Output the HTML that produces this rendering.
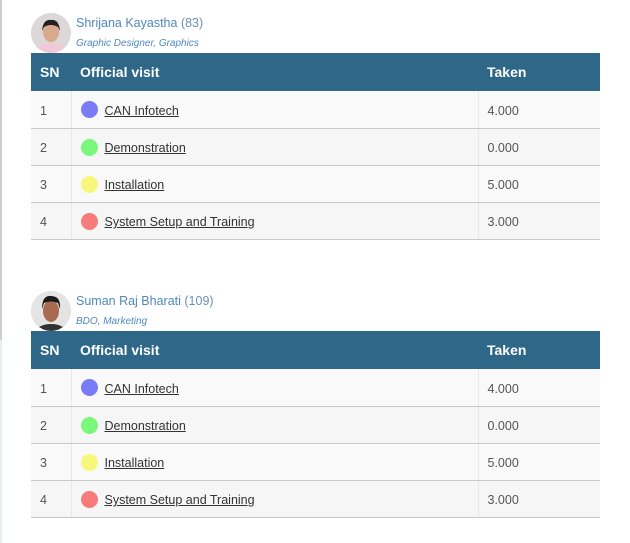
<!DOCTYPE html>
<html><head><style>
*{margin:0;padding:0;box-sizing:border-box}
body{width:630px;height:543px;background:#fff;font-family:"Liberation Sans",sans-serif;position:relative;overflow:hidden}
.lb{position:absolute;left:0;top:0;width:2px;height:340px;background:#cfcfcf}
.lb2{position:absolute;left:0;top:340px;width:2px;height:203px;background:#e8eef5}
.blk{position:absolute;left:31px;width:569px}
.av{position:absolute;left:0;top:0;width:40px;height:40px;border-radius:50%;background:#e0dcdc;overflow:hidden}
.nm{position:absolute;left:45px;top:3px;font-size:12.5px;color:#4f88bf;white-space:nowrap}
.nm span{color:#6a8fb5}
.ds{position:absolute;left:45px;top:25px;font-size:10px;font-style:italic;color:#4f88bf;white-space:nowrap}
table{position:absolute;left:0;top:40px;width:569px;border-collapse:collapse;font-size:12.5px}
th{background:#2e6787;color:#fff;height:38px;text-align:left;font-size:14px;font-weight:bold;padding-left:9px}
td{height:37px;border-bottom:1px solid #c8c8c8;color:#555;background:#f9f9f9;padding-left:9px;padding-top:3px;vertical-align:middle}
tr:nth-child(odd) td{background:#f6f6f6}
td.c{border-right:1px solid #e8e8e8;}
td.m{border-right:1px solid #e8e8e8;color:#333;position:relative;padding-left:33px}
td.m u{color:#333}
.d{position:absolute;left:9px;top:10px;width:17px;height:17px;border-radius:50%}
</style></head><body>
<div class="lb"></div><div class="lb2"></div>

<div class="blk" style="top:13px">
<div class="av"><svg width="40" height="40"><rect width="40" height="40" fill="#ddd8d8"/><ellipse cx="20" cy="40" rx="16" ry="10" fill="#f0c8d8"/><ellipse cx="20" cy="19" rx="8" ry="10" fill="#d9a98e"/><path d="M11 18 Q12 6 20 7 Q28 6 29 18 L27 14 Q20 10 13 14Z" fill="#222"/></svg></div>
<div class="nm">Shrijana Kayastha <span>(83)</span></div>
<div class="ds">Graphic Designer, Graphics</div>
<table>
<tr><th style="width:40px">SN</th><th style="width:407px">Official visit</th><th>Taken</th></tr>
<tr><td class="c">1</td><td class="m"><span class="d" style="background:#7b7bf7"></span><u>CAN Infotech</u></td><td>4.000</td></tr>
<tr><td class="c">2</td><td class="m"><span class="d" style="background:#7bf77b"></span><u>Demonstration</u></td><td>0.000</td></tr>
<tr><td class="c">3</td><td class="m"><span class="d" style="background:#f7f77b"></span><u>Installation</u></td><td>5.000</td></tr>
<tr><td class="c">4</td><td class="m"><span class="d" style="background:#f77b7b"></span><u>System Setup and Training</u></td><td>3.000</td></tr>
</table>
</div>

<div class="blk" style="top:291px">
<div class="av"><svg width="40" height="40"><rect width="40" height="40" fill="#e4e4e4"/><ellipse cx="20" cy="42" rx="16" ry="9" fill="#333"/><ellipse cx="20" cy="20" rx="8" ry="11" fill="#a86b50"/><path d="M11 18 Q11 4 20 5 Q30 5 29 18 L27 12 Q20 9 13 12Z" fill="#1a1a1a"/></svg></div>
<div class="nm">Suman Raj Bharati <span>(109)</span></div>
<div class="ds">BDO, Marketing</div>
<table>
<tr><th style="width:40px">SN</th><th style="width:407px">Official visit</th><th>Taken</th></tr>
<tr><td class="c">1</td><td class="m"><span class="d" style="background:#7b7bf7"></span><u>CAN Infotech</u></td><td>4.000</td></tr>
<tr><td class="c">2</td><td class="m"><span class="d" style="background:#7bf77b"></span><u>Demonstration</u></td><td>0.000</td></tr>
<tr><td class="c">3</td><td class="m"><span class="d" style="background:#f7f77b"></span><u>Installation</u></td><td>5.000</td></tr>
<tr><td class="c">4</td><td class="m"><span class="d" style="background:#f77b7b"></span><u>System Setup and Training</u></td><td>3.000</td></tr>
</table>
</div>
</body></html>
